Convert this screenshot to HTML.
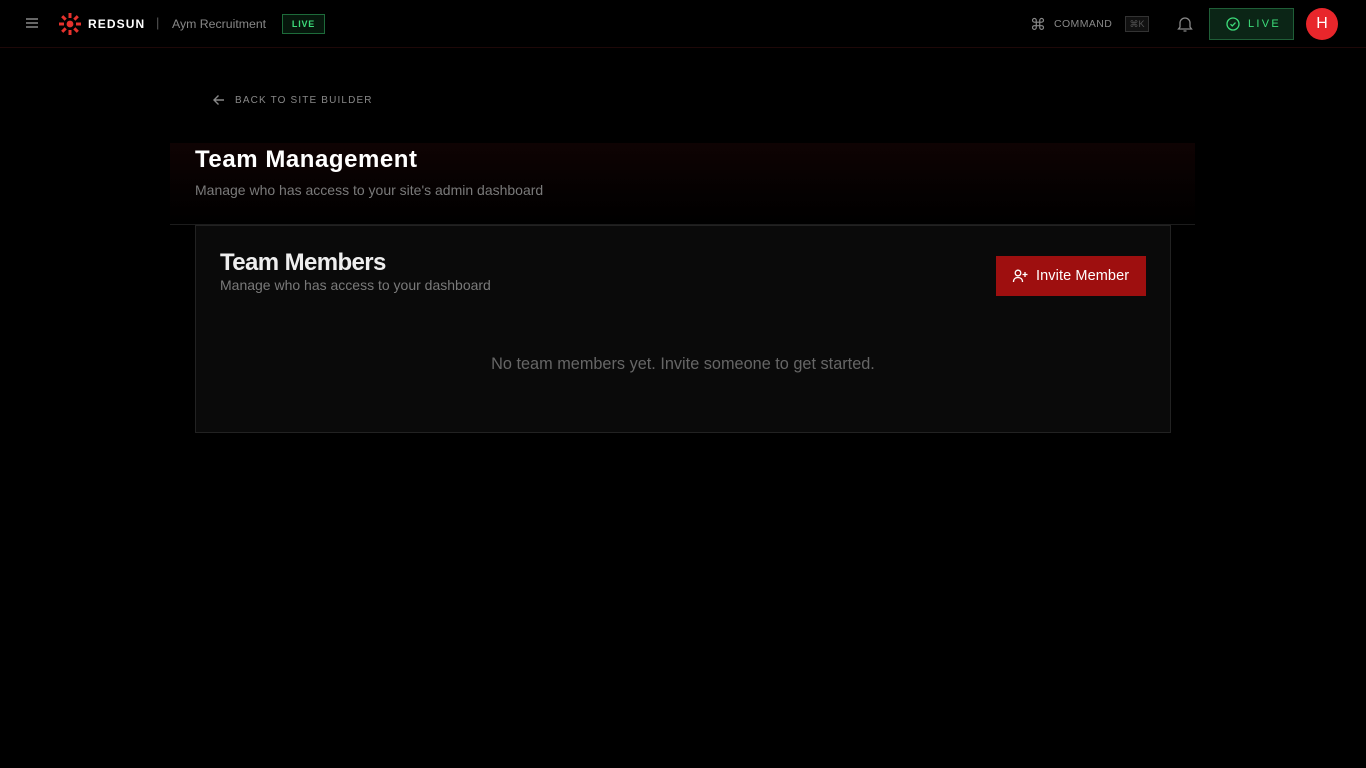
<!DOCTYPE html>
<html><head><style>
*{box-sizing:border-box;margin:0;padding:0}
body{width:1366px;height:768px;background:#000;font-family:"Liberation Sans",sans-serif;position:relative;overflow:hidden;color:#fff}
.abs{position:absolute}
</style></head><body>
<div class="abs" style="left:0;top:0;width:1366px;height:48px;border-bottom:1px solid #1e0808"></div>
<svg class="abs" style="left:25px;top:17px" width="14" height="12" viewBox="0 0 14 12"><path d="M1 2h12M1 6h12M1 10h12" stroke="#888" stroke-width="1.6"/></svg>
<svg class="abs" style="left:58px;top:12px" width="24" height="24" viewBox="-12 -12 24 24">
<circle r="3.4" fill="#e5322d"/>
<g stroke="#e5322d" stroke-width="3" stroke-linecap="butt">
<path d="M0-6V-11M0 6V11M-6 0H-11M6 0H11M4.3-4.3L7.8-7.8M-4.3 4.3L-7.8 7.8M4.3 4.3L7.8 7.8M-4.3-4.3L-7.8-7.8"/></g></svg>
<div class="abs" style="left:88px;top:17px;font-size:12px;font-weight:bold;letter-spacing:1.1px">REDSUN</div>
<div class="abs" style="left:156px;top:15px;font-size:13px;color:#555">|</div>
<div class="abs" style="left:172px;top:17px;font-size:12.3px;color:#888">Aym Recruitment</div>
<div class="abs" style="left:282px;top:14px;width:43px;height:20px;border:1px solid #1d6b3a;background:#06170c;color:#3ddc7a;font-size:9px;font-weight:bold;letter-spacing:.8px;text-align:center;line-height:18px">LIVE</div>
<div class="abs" style="left:1030px;top:15px;font-size:16px;color:#888">⌘</div>
<div class="abs" style="left:1054px;top:18px;font-size:10.5px;color:#888;letter-spacing:.4px">COMMAND</div>
<div class="abs" style="left:1125px;top:16px;width:24px;height:16px;border:1px solid #333;background:#111;color:#555;font-size:9px;text-align:center;line-height:14px">⌘K</div>
<svg class="abs" style="left:1177px;top:15px" width="16" height="18" viewBox="0 0 16 18"><path d="M3 12V8a5 5 0 0 1 10 0v4l1.5 2h-13zM6.5 16h3" fill="none" stroke="#888" stroke-width="1.3"/></svg>
<div class="abs" style="left:1209px;top:8px;width:85px;height:32px;border:1px solid #1f5e37;background:#0b2516"></div>
<svg class="abs" style="left:1226px;top:17px" width="14" height="14" viewBox="0 0 14 14"><circle cx="7" cy="7" r="6" fill="none" stroke="#3ddc7a" stroke-width="1.3"/><path d="M4.5 7.2l1.8 1.7 3.2-3.3" fill="none" stroke="#3ddc7a" stroke-width="1.3"/></svg>
<div class="abs" style="left:1248px;top:18px;font-size:11px;color:#3ddc7a;letter-spacing:2.3px">LIVE</div>
<div class="abs" style="left:1306px;top:8px;width:32px;height:32px;border-radius:50%;background:#e8262b;text-align:center;line-height:32px;font-size:16px">H</div>

<svg class="abs" style="left:212px;top:93px" width="14" height="14" viewBox="0 0 14 14"><path d="M12 7H2M6.5 2.5L2 7l4.5 4.5" fill="none" stroke="#888" stroke-width="1.4"/></svg>
<div class="abs" style="left:235px;top:95px;font-size:10px;color:#888;letter-spacing:1.15px">BACK TO SITE BUILDER</div>

<div class="abs" style="left:170px;top:143px;width:1025px;height:82px;background:linear-gradient(#0f0303,#050101 60%,#000);border-bottom:1px solid #1c1c1c"></div>
<div class="abs" style="left:195px;top:146px;font-size:24px;font-weight:bold;letter-spacing:.55px">Team Management</div>
<div class="abs" style="left:195px;top:182px;font-size:14px;color:#7a7a7a">Manage who has access to your site's admin dashboard</div>

<div class="abs" style="left:195px;top:225px;width:976px;height:208px;background:#0a0a0a;border:1px solid #222"></div>
<div class="abs" style="left:220px;top:249px;font-size:24px;font-weight:bold;color:#eee;letter-spacing:-.6px">Team Members</div>
<div class="abs" style="left:220px;top:277px;font-size:14px;color:#7a7a7a">Manage who has access to your dashboard</div>
<div class="abs" style="left:996px;top:256px;width:150px;height:40px;background:#9e0f0f"></div>
<svg class="abs" style="left:1012px;top:268px" width="16" height="16" viewBox="0 0 16 16"><circle cx="6" cy="5" r="2.8" fill="none" stroke="#fff" stroke-width="1.3"/><path d="M1.5 14c0-3 2-4.5 4.5-4.5S10.5 11 10.5 14M13 4v5M10.5 6.5h5" fill="none" stroke="#fff" stroke-width="1.3"/></svg>
<div class="abs" style="left:1036px;top:268px;font-size:14.5px;color:#fff;letter-spacing:.1px">Invite Member</div>
<div class="abs" style="left:195px;top:355px;width:976px;text-align:center;font-size:16.3px;color:#666">No team members yet. Invite someone to get started.</div>
</body></html>
